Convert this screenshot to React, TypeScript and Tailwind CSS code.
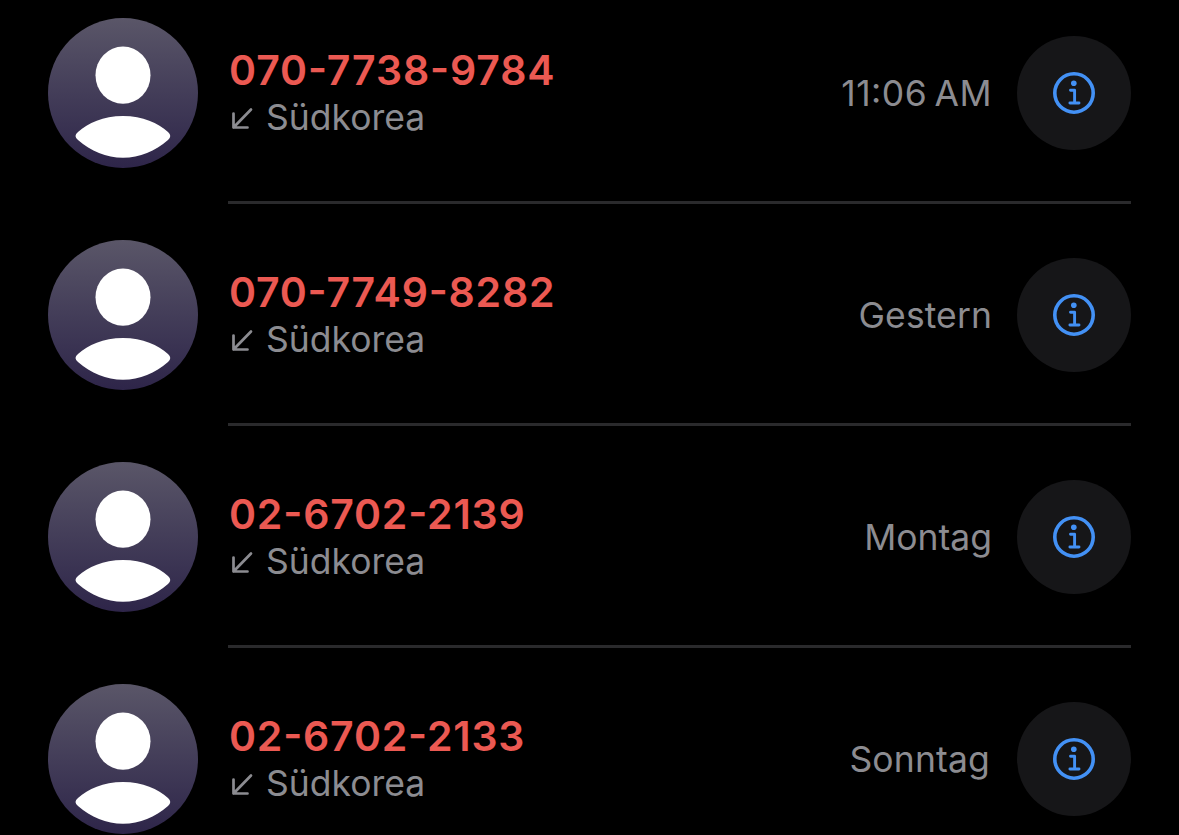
type Call = {
    number: string;
    country: string;
    time: string;
    timeClass: string;
    numberClass: string;
};

const calls: Call[] = [
    { number: '070-7738-9784', country: 'Südkorea', time: '11:06 AM', timeClass: 'mr-[25px] tracking-[0.45px] [word-spacing:-3px]', numberClass: 'tracking-[0.88px]' },
    { number: '070-7749-8282', country: 'Südkorea', time: 'Gestern', timeClass: 'mr-[25px] tracking-[0.1px]', numberClass: 'tracking-[0.78px]' },
    { number: '02-6702-2139', country: 'Südkorea', time: 'Montag', timeClass: 'mr-[25px] tracking-normal', numberClass: 'tracking-[0.82px]' },
    { number: '02-6702-2133', country: 'Südkorea', time: 'Sonntag', timeClass: 'mr-[27px] tracking-[0.15px]', numberClass: 'tracking-[0.8px]' },
];

const Avatar = () => (
    <div className="size-[150px] shrink-0 rounded-full bg-linear-to-b from-[#5a5668] to-[#2e2549]">
        <svg viewBox="0 0 150 150" className="size-full" fill="#fff">
            <ellipse cx="75" cy="57.2" rx="27.5" ry="28.6" />
            <path d="M75 98C95 98 110 105 120 114Q124.500 118 120 122C107 133 92 139.800 75 139.800S43 133 30 122Q25 118 30 114C40 105 55 98 75 98Z" />
        </svg>
    </div>
);

const IncomingArrow = () => (
    <svg viewBox="0 0 24 24" className="mt-[3px] size-6 shrink-0" fill="none" stroke="currentColor" strokeWidth="2.7" strokeLinecap="round" strokeLinejoin="round">
        <path d="M21 2.500L3.500 20.500M3.500 6.500V20.500H17.500" />
    </svg>
);

const InfoButton = () => (
    <button className="flex size-[114px] shrink-0 items-center justify-center rounded-full bg-[#161618] text-[#4391f5]" aria-label="Info">
        <svg viewBox="0 0 42 42" className="size-[42px]" fill="none" stroke="currentColor" strokeLinecap="round" strokeLinejoin="round">
            <circle cx="21" cy="21" r="19.200" strokeWidth="3.600" />
            <circle cx="20.800" cy="11.300" r="2.800" fill="currentColor" stroke="none" />
            <path d="M17.500 18.300H21.600V31M16.900 31H26" strokeWidth="2.900" />
        </svg>
    </button>
);

const CallRow = ({ call }: { call: Call }) => (
    <li className="flex h-[222px] shrink-0">
        <Avatar />
        <div className="ml-[30px] h-[186px] flex-1 border-b-[3px] border-[#2a2a2c]">
            <div className="flex h-[150px] items-center">
                <div className="flex-1 whitespace-nowrap">
                    <div className={`pl-px text-[41px] leading-[48px] font-semibold text-[#eb5952] ${call.numberClass}`}>{call.number}</div>
                    <div className="flex items-center pl-0.5 text-[#8c8c91]">
                        <IncomingArrow />
                        <span className="-mb-px ml-3 pt-px text-[35.5px] leading-[46px]">{call.country}</span>
                    </div>
                </div>
                <span className={`-mb-px pt-px text-[35.5px] leading-[46px] whitespace-nowrap text-[#8c8c91] ${call.timeClass}`}>{call.time}</span>
                <InfoButton />
            </div>
        </div>
    </li>
);

const App = () => (
    <div className="h-[835px] w-[1179px] overflow-hidden bg-black font-['Inter',sans-serif] [font-feature-settings:'calt'_1]">
        <ul className="flex flex-col px-12 pt-[18px]">
            {calls.map((call) => (
                <CallRow key={call.number} call={call} />
            ))}
        </ul>
    </div>
);

export default App;
